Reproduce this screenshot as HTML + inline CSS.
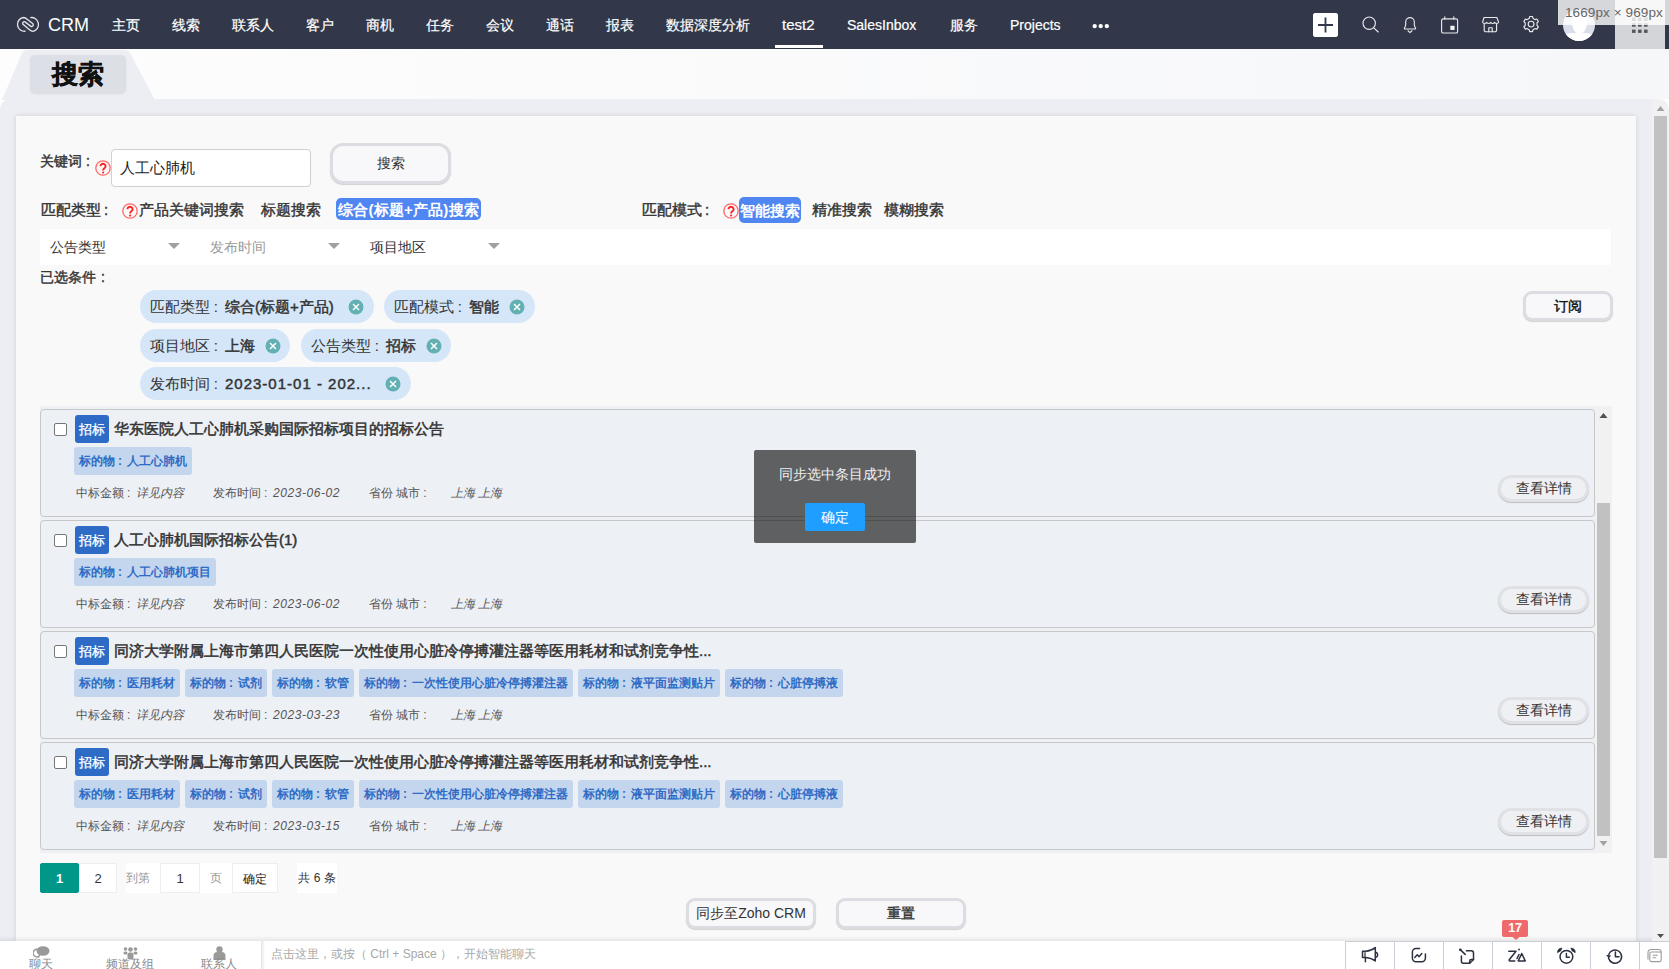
<!DOCTYPE html>
<html><head><meta charset="utf-8">
<style>
*{margin:0;padding:0;box-sizing:border-box}
html,body{width:1669px;height:969px;overflow:hidden}
body{position:relative;font-family:"Liberation Sans",sans-serif;background:#fff;color:#333}
.a{position:absolute;white-space:nowrap}
.hd{left:0;top:0;width:1669px;height:49px;background:#323849}
.nav{top:17px;font-size:14px;line-height:17px;color:#fff;-webkit-text-stroke:0.2px #fff}
.b{font-weight:bold}
.cl{display:inline-block;width:1em;padding-left:.25em}
.m{-webkit-text-stroke:0.4px currentColor}
.chip b{font-weight:normal;-webkit-text-stroke:0.45px currentColor}
.qi{width:16px;height:16px}
.chip{height:33px;border-radius:17px;background:#d4e6f8;font-size:15px;line-height:33px;color:#333}
.cx{width:16px;height:16px;border-radius:50%;background:#62b0b3}
.item{left:40px;width:1555px;height:108px;background:#edf0f5;border:1px solid #c6c7c9;border-radius:4px}
.cb{width:13px;height:13px;border:1px solid #767676;border-radius:2px;background:#fff}
.badge{width:34px;height:28px;background:#2d6bc7;border-radius:3px;color:#fff;font-size:13px;line-height:29px;text-align:center;-webkit-text-stroke:0.3px #fff}
.ttl{font-size:15px;line-height:18px;color:#333;-webkit-text-stroke:0.5px #333}
.tag{height:28px;background:#c4d6ee;border-radius:3px;color:#2f6bc4;font-size:12px;line-height:28px;font-weight:bold;padding:0 5px}
.meta{font-size:12px;line-height:14px;color:#555}
.it{font-style:italic}
.vd{width:91px;height:27px;border:3px solid #e0e1e5;border-radius:14px;background:#eef0f4;font-size:14px;line-height:20px;text-align:center;color:#333;box-shadow:0 1px 1px rgba(0,0,0,.22)}
.btn{border:3px solid #dcdde3;background:#f8f8fa;text-align:center;color:#333;box-shadow:0 1px 1px rgba(0,0,0,.16)}
.pg{height:30px;background:#fff;border:1px solid #eee;font-size:13px;line-height:30px;text-align:center;color:#333}
.bdiv{top:941px;width:1px;height:28px;background:#c9ced6}
</style></head><body>

<!-- HEADER -->
<div class="a hd"></div>
<svg class="a" style="left:0;top:0" width="48" height="40" viewBox="0 0 48 40"><path d="M25.6 31.2A7 6.9 0 1 1 23.4 17.5C25.3 17.5 26.4 18.4 27.5 19.4L32.6 23.6A1.6 1.6 0 0 1 30.6 26.1L25 21.9A1.6 1.6 0 0 0 23 24.3L28.6 28.9C29.8 29.9 31 31.3 33 31.3A6.8 6.9 0 1 0 30.3 17.7" fill="none" stroke="#e2e4e8" stroke-width="1.35"/></svg>
<div class="a" style="left:48px;top:15px;font-size:18px;line-height:21px;color:#fff">CRM</div>
<div class="a nav" style="left:112px">主页</div>
<div class="a nav" style="left:172px">线索</div>
<div class="a nav" style="left:232px">联系人</div>
<div class="a nav" style="left:306px">客户</div>
<div class="a nav" style="left:366px">商机</div>
<div class="a nav" style="left:426px">任务</div>
<div class="a nav" style="left:486px">会议</div>
<div class="a nav" style="left:546px">通话</div>
<div class="a nav" style="left:606px">报表</div>
<div class="a nav" style="left:666px">数据深度分析</div>
<div class="a nav" style="left:782px;top:16px;font-size:15px">test2</div>
<div class="a" style="left:775px;top:45px;width:48px;height:3px;background:#fff"></div>
<div class="a nav" style="left:847px">SalesInbox</div>
<div class="a nav" style="left:950px">服务</div>
<div class="a nav" style="left:1010px">Projects</div>
<svg class="a" style="left:1090px;top:22px" width="20" height="8"><g fill="#fff"><circle cx="4.7" cy="4.1" r="2.2"/><circle cx="10.7" cy="4.1" r="2.2"/><circle cx="16.8" cy="4.1" r="2.2"/></g></svg>

<!-- header right icons -->
<div class="a" style="left:1313px;top:13px;width:25px;height:24px;background:#fff;border-radius:3px"></div>
<svg class="a" style="left:1300px;top:0" width="260" height="49" viewBox="1300 0 260 49"><g fill="none" stroke="#e8e9ec" stroke-width="1.15" stroke-linecap="round" stroke-linejoin="round">
<circle cx="1369.2" cy="23.2" r="6.2"/><path d="M1373.8 27.9l4.4 4.1"/>
<path d="M1404.6 27.9c1-1.2 1.1-2.2 1.1-3.6v-2.4a4.3 4.3 0 0 1 8.6 0v2.4c0 1.4 0.1 2.4 1.1 3.6c0.5 0.6 0.2 1.1-0.5 1.1h-9.8c-0.7 0-1-0.5-0.5-1.1z"/><path d="M1408 30.8l2 1.8 2-1.8"/>
<rect x="1441.6" y="18.8" width="16" height="14.2" rx="1.6"/><path d="M1444.8 16.8v2.2M1453.8 16.8v2.2"/>
<path d="M1484 17.5h12.8l1.8 4.6a2 2 0 0 1-2 1.4c-0.8 0-1.4-0.4-2-1.1c-0.6 0.7-1.2 1.1-2 1.1s-1.4-0.4-2-1.1c-0.6 0.7-1.2 1.1-2 1.1s-1.4-0.4-2-1.1c-0.6 0.7-1.2 1.1-2 1.1a2 2 0 0 1-2-1.4z"/><path d="M1484.2 24v6.2a1.5 1.5 0 0 0 1.5 1.5h9.4a1.5 1.5 0 0 0 1.5-1.5V24"/><path d="M1488.8 31.7v-4h3.4v4"/>
<path d="M1528.15 18.99 L1529.32 18.27 L1529.63 16.54 L1532.57 16.54 L1532.88 18.27 L1534.05 18.99 L1535.26 19.64 L1536.91 19.05 L1538.38 21.59 L1537.04 22.73 L1537.00 24.10 L1537.04 25.47 L1538.38 26.61 L1536.91 29.15 L1535.26 28.56 L1534.05 29.21 L1532.88 29.93 L1532.57 31.66 L1529.63 31.66 L1529.32 29.93 L1528.15 29.21 L1526.94 28.56 L1525.29 29.15 L1523.82 26.61 L1525.16 25.47 L1525.20 24.10 L1525.16 22.73 L1523.82 21.59 L1525.29 19.05 L1526.94 19.64Z"/><circle cx="1531.1" cy="24.1" r="2.9"/>
</g><rect x="1450.3" y="25.8" width="4.3" height="4.1" rx="0.6" fill="#f0f1f3"/></svg>
<div class="a" style="left:1313px;top:13px;width:25px;height:24px;background:#fff;border-radius:3px;z-index:0"></div>
<svg class="a" style="left:1313px;top:13px" width="25" height="24"><path d="M12.5 4.5v15M5 12h15" stroke="#323849" stroke-width="1.8"/></svg>
<div class="a" style="left:1563px;top:9px;width:32px;height:32px;border-radius:50%;background:#d9dee9;overflow:hidden"><div class="a" style="left:8.5px;top:3px;width:15px;height:22px;border-radius:50%;background:#fff"></div><div class="a" style="left:-2px;top:24px;width:36px;height:20px;border-radius:10px 10px 0 0;background:#fff"></div></div>
<div class="a" style="left:1615px;top:0;width:50px;height:49px;background:#d4d5d9"></div>
<svg class="a" style="left:1630px;top:16px" width="20" height="18"><g fill="#57585d"><rect x="2" y="1.5" width="3.6" height="3.5"/><rect x="8" y="1.5" width="3.6" height="3.5"/><rect x="14" y="1.5" width="3.6" height="3.5"/><rect x="2" y="7.2" width="3.6" height="3.5"/><rect x="8" y="7.2" width="3.6" height="3.5"/><rect x="14" y="7.2" width="3.6" height="3.5"/><rect x="2" y="13.6" width="3.6" height="3.3"/><rect x="8" y="13.6" width="3.6" height="3.3"/><rect x="14" y="13.6" width="3.6" height="3.3"/></g></svg>
<div class="a" style="left:1558px;top:0;width:111px;height:25px;background:rgba(255,255,255,.8)"></div>
<div class="a" style="left:1565px;top:4px;font-size:13.5px;line-height:18px;color:#666;letter-spacing:0.1px">1669px × 969px</div>

<!-- TAB AREA -->
<div class="a" style="left:0;top:49px;width:1669px;height:50px;background:linear-gradient(90deg,#fdfdfd,#f6f7f9)"></div>
<svg class="a" style="left:0;top:49px" width="160" height="52"><path d="M2 51 L22 4 Q24 1 28 1 L124 1 Q128 1 130 4 L155 51 Z" fill="#eceef3"/></svg>
<div class="a" style="left:30px;top:55px;width:96px;height:38px;background:#dcdfe6;border-radius:5px;box-shadow:0 1px 2px rgba(0,0,0,.08)"></div>
<div class="a b" style="left:52px;top:59px;font-size:26px;line-height:30px;color:#111;-webkit-text-stroke:0.5px #111">搜索</div>

<!-- PANEL -->
<div class="a" style="left:0;top:99px;width:1652px;height:842px;background:#eceef3;border-top-left-radius:10px"></div>
<div class="a" style="left:1652px;top:99px;width:17px;height:842px;background:#f1f1f1;border-top-right-radius:10px"></div>
<svg class="a" style="left:1654px;top:103px" width="13" height="10"><path d="M2.5 8h8l-4-5z" fill="#a3a3a3"/></svg>
<div class="a" style="left:1654px;top:116px;width:13px;height:742px;background:#c1c1c1"></div>
<svg class="a" style="left:1654px;top:931px" width="13" height="10"><path d="M3 3h7l-3.5 4z" fill="#505050"/></svg>

<!-- CARD -->
<div class="a" style="left:16px;top:116px;width:1620px;height:825px;background:#f9f9f9;box-shadow:0 0 5px rgba(0,0,0,.12)"></div>


<!-- search row -->
<div class="a m" style="left:40px;top:152px;font-size:14px;line-height:18px;color:#333">关键词<span style="margin-left:4px">:</span></div>
<div class="a qi" style="left:95px;top:160px"><svg width="16" height="16" style="display:block"><circle cx="8" cy="8" r="7.2" fill="none" stroke="#f66" stroke-width="1.3"/><path d="M5.4 6.1a2.6 2.4 0 1 1 4 2.1c-0.9 0.6-1.3 1.1-1.3 2.2" fill="none" stroke="#f22" stroke-width="1.9"/><circle cx="8.1" cy="12.5" r="1.1" fill="#f22"/></svg></div>
<div class="a" style="left:111px;top:149px;width:200px;height:38px;background:#fff;border:1px solid #cfd0d2;border-radius:4px;font-size:15px;line-height:36px;padding-left:8px;color:#222">人工心肺机</div>
<div class="a btn" style="left:330px;top:143px;width:121px;height:41px;border-radius:13px;font-size:14px;line-height:35px">搜索</div>

<div class="a m" style="left:41px;top:201px;font-size:15px;line-height:18px">匹配类型<span style="margin-left:3px">:</span></div>
<div class="a qi" style="left:122px;top:203px"><svg width="16" height="16" style="display:block"><circle cx="8" cy="8" r="7.2" fill="none" stroke="#f66" stroke-width="1.3"/><path d="M5.4 6.1a2.6 2.4 0 1 1 4 2.1c-0.9 0.6-1.3 1.1-1.3 2.2" fill="none" stroke="#f22" stroke-width="1.9"/><circle cx="8.1" cy="12.5" r="1.1" fill="#f22"/></svg></div>
<div class="a m" style="left:139px;top:201px;font-size:15px;line-height:18px">产品关键词搜索</div>
<div class="a m" style="left:261px;top:201px;font-size:15px;line-height:18px">标题搜索</div>
<div class="a b" style="left:336px;top:198px;width:145px;height:22px;background:#4f86f2;border-radius:5px;color:#fff;font-size:15px;line-height:23px;letter-spacing:0.2px;text-align:center">综合(标题+产品)搜索</div>

<div class="a m" style="left:642px;top:201px;font-size:15px;line-height:18px">匹配模式<span style="margin-left:3px">:</span></div>
<div class="a qi" style="left:723px;top:203px"><svg width="16" height="16" style="display:block"><circle cx="8" cy="8" r="7.2" fill="none" stroke="#f66" stroke-width="1.3"/><path d="M5.4 6.1a2.6 2.4 0 1 1 4 2.1c-0.9 0.6-1.3 1.1-1.3 2.2" fill="none" stroke="#f22" stroke-width="1.9"/><circle cx="8.1" cy="12.5" r="1.1" fill="#f22"/></svg></div>
<div class="a b" style="left:739px;top:197px;width:62px;height:26px;background:#4f86f2;border-radius:5px;color:#fff;font-size:15px;line-height:28px;text-align:center">智能搜索</div>
<div class="a m" style="left:812px;top:201px;font-size:15px;line-height:18px">精准搜索</div>
<div class="a m" style="left:884px;top:201px;font-size:15px;line-height:18px">模糊搜索</div>

<!-- filter bar -->
<div class="a" style="left:40px;top:229px;width:1571px;height:36px;background:#fff"></div>
<div class="a" style="left:50px;top:238px;font-size:14px;line-height:18px;color:#333">公告类型</div>
<svg class="a" style="left:168px;top:243px" width="12" height="7"><path d="M0 0h12l-6 6z" fill="#a0a0a0"/></svg>
<div class="a" style="left:210px;top:238px;font-size:14px;line-height:18px;color:#9a9a9a">发布时间</div>
<svg class="a" style="left:328px;top:243px" width="12" height="7"><path d="M0 0h12l-6 6z" fill="#a0a0a0"/></svg>
<div class="a" style="left:370px;top:238px;font-size:14px;line-height:18px;color:#333">项目地区</div>
<svg class="a" style="left:488px;top:243px" width="12" height="7"><path d="M0 0h12l-6 6z" fill="#a0a0a0"/></svg>

<div class="a m" style="left:40px;top:268px;font-size:14px;line-height:18px">已选条件<span style="margin-left:5px">:</span></div>

<!-- chips -->
<div class="a chip" style="left:140px;top:290px;width:234px;padding-left:10px">匹配类型<span class="cl">:</span><b>综合(标题+产品)</b></div>
<div class="a chip" style="left:384px;top:290px;width:151px;padding-left:10px">匹配模式<span class="cl">:</span><b>智能</b></div>
<div class="a chip" style="left:140px;top:329px;width:150px;padding-left:10px">项目地区<span class="cl">:</span><b>上海</b></div>
<div class="a chip" style="left:301px;top:329px;width:150px;padding-left:10px">公告类型<span class="cl">:</span><b>招标</b></div>
<div class="a chip" style="left:140px;top:367px;width:271px;padding-left:10px">发布时间<span class="cl">:</span><b style="letter-spacing:1px">2023-01-01 - 202...</b></div>
<svg class="a" style="left:348px;top:299px" width="16" height="16"><circle cx="8" cy="8" r="7.5" fill="#62b0b3"/><path d="M5 5l6 6M11 5l-6 6" stroke="#fff" stroke-width="1.5"/></svg>
<svg class="a" style="left:509px;top:299px" width="16" height="16"><circle cx="8" cy="8" r="7.5" fill="#62b0b3"/><path d="M5 5l6 6M11 5l-6 6" stroke="#fff" stroke-width="1.5"/></svg>
<svg class="a" style="left:265px;top:338px" width="16" height="16"><circle cx="8" cy="8" r="7.5" fill="#62b0b3"/><path d="M5 5l6 6M11 5l-6 6" stroke="#fff" stroke-width="1.5"/></svg>
<svg class="a" style="left:426px;top:338px" width="16" height="16"><circle cx="8" cy="8" r="7.5" fill="#62b0b3"/><path d="M5 5l6 6M11 5l-6 6" stroke="#fff" stroke-width="1.5"/></svg>
<svg class="a" style="left:385px;top:376px" width="16" height="16"><circle cx="8" cy="8" r="7.5" fill="#62b0b3"/><path d="M5 5l6 6M11 5l-6 6" stroke="#fff" stroke-width="1.5"/></svg>


<div class="a btn m" style="left:1523px;top:291px;width:90px;height:30px;border-radius:9px;font-size:14px;line-height:24px;color:#111">订阅</div>


<!-- LIST -->
<div class="a" style="left:40px;top:406px;width:1556px;height:447px;background:#eef0f4"></div>
<div class="a" style="left:1595px;top:406px;width:17px;height:447px;background:#f1f1f1"></div>
<svg class="a" style="left:1597px;top:410px" width="13" height="10"><path d="M2.5 8h8l-4-5z" fill="#505050"/></svg>
<div class="a" style="left:1597px;top:503px;width:13px;height:333px;background:#c1c1c1"></div>
<svg class="a" style="left:1597px;top:838px" width="13" height="10"><path d="M2.5 3h8l-4 5z" fill="#a3a3a3"/></svg>
<div class="a item" style="top:409px"></div>
<div class="a cb" style="left:54px;top:423px"></div>
<div class="a badge" style="left:75px;top:415px">招标</div>
<div class="a ttl" style="left:114px;top:420px">华东医院人工心肺机采购国际招标项目的招标公告</div>
<div class="a" style="left:74px;top:447px;display:flex;gap:5px"><span class="tag">标的物<span class="cl">:</span>人工心肺机</span></div>
<div class="a meta" style="left:76px;top:486px">中标金额<span class="cl">:</span><span class="it">详见内容</span></div>
<div class="a meta" style="left:213px;top:486px">发布时间<span class="cl">:</span><span class="it" style="letter-spacing:0.55px">2023-06-02</span></div>
<div class="a meta" style="left:369px;top:486px">省份 城市<span class="cl">:</span></div>
<div class="a meta it" style="left:451px;top:486px">上海 上海</div>
<div class="a vd" style="left:1498px;top:475px">查看详情</div>
<div class="a item" style="top:520px"></div>
<div class="a cb" style="left:54px;top:534px"></div>
<div class="a badge" style="left:75px;top:526px">招标</div>
<div class="a ttl" style="left:114px;top:531px">人工心肺机国际招标公告(1)</div>
<div class="a" style="left:74px;top:558px;display:flex;gap:5px"><span class="tag">标的物<span class="cl">:</span>人工心肺机项目</span></div>
<div class="a meta" style="left:76px;top:597px">中标金额<span class="cl">:</span><span class="it">详见内容</span></div>
<div class="a meta" style="left:213px;top:597px">发布时间<span class="cl">:</span><span class="it" style="letter-spacing:0.55px">2023-06-02</span></div>
<div class="a meta" style="left:369px;top:597px">省份 城市<span class="cl">:</span></div>
<div class="a meta it" style="left:451px;top:597px">上海 上海</div>
<div class="a vd" style="left:1498px;top:586px">查看详情</div>
<div class="a item" style="top:631px"></div>
<div class="a cb" style="left:54px;top:645px"></div>
<div class="a badge" style="left:75px;top:637px">招标</div>
<div class="a ttl" style="left:114px;top:642px">同济大学附属上海市第四人民医院一次性使用心脏冷停搏灌注器等医用耗材和试剂竞争性...</div>
<div class="a" style="left:74px;top:669px;display:flex;gap:5px"><span class="tag">标的物<span class="cl">:</span>医用耗材</span><span class="tag">标的物<span class="cl">:</span>试剂</span><span class="tag">标的物<span class="cl">:</span>软管</span><span class="tag">标的物<span class="cl">:</span>一次性使用心脏冷停搏灌注器</span><span class="tag">标的物<span class="cl">:</span>液平面监测贴片</span><span class="tag">标的物<span class="cl">:</span>心脏停搏液</span></div>
<div class="a meta" style="left:76px;top:708px">中标金额<span class="cl">:</span><span class="it">详见内容</span></div>
<div class="a meta" style="left:213px;top:708px">发布时间<span class="cl">:</span><span class="it" style="letter-spacing:0.55px">2023-03-23</span></div>
<div class="a meta" style="left:369px;top:708px">省份 城市<span class="cl">:</span></div>
<div class="a meta it" style="left:451px;top:708px">上海 上海</div>
<div class="a vd" style="left:1498px;top:697px">查看详情</div>
<div class="a item" style="top:742px"></div>
<div class="a cb" style="left:54px;top:756px"></div>
<div class="a badge" style="left:75px;top:748px">招标</div>
<div class="a ttl" style="left:114px;top:753px">同济大学附属上海市第四人民医院一次性使用心脏冷停搏灌注器等医用耗材和试剂竞争性...</div>
<div class="a" style="left:74px;top:780px;display:flex;gap:5px"><span class="tag">标的物<span class="cl">:</span>医用耗材</span><span class="tag">标的物<span class="cl">:</span>试剂</span><span class="tag">标的物<span class="cl">:</span>软管</span><span class="tag">标的物<span class="cl">:</span>一次性使用心脏冷停搏灌注器</span><span class="tag">标的物<span class="cl">:</span>液平面监测贴片</span><span class="tag">标的物<span class="cl">:</span>心脏停搏液</span></div>
<div class="a meta" style="left:76px;top:819px">中标金额<span class="cl">:</span><span class="it">详见内容</span></div>
<div class="a meta" style="left:213px;top:819px">发布时间<span class="cl">:</span><span class="it" style="letter-spacing:0.55px">2023-03-15</span></div>
<div class="a meta" style="left:369px;top:819px">省份 城市<span class="cl">:</span></div>
<div class="a meta it" style="left:451px;top:819px">上海 上海</div>
<div class="a vd" style="left:1498px;top:808px">查看详情</div>

<!-- DIALOG -->
<div class="a" style="left:754px;top:450px;width:162px;height:93px;background:rgba(0,0,0,.6);border-radius:2px"></div>
<div class="a" style="left:754px;top:465px;width:162px;text-align:center;font-size:14px;line-height:18px;color:#f0f0f0">同步选中条目成功</div>
<div class="a" style="left:805px;top:503px;width:60px;height:28px;background:#1e9fff;border-radius:2px;color:#fff;font-size:14px;line-height:28px;text-align:center">确定</div>

<!-- PAGINATION -->
<div class="a pg" style="left:40px;top:863px;width:39px;background:#009688;border-color:#009688;color:#fff;border-radius:2px;font-weight:bold">1</div>
<div class="a pg" style="left:79px;top:863px;width:38px">2</div>
<div class="a pg" style="left:126px;top:863px;width:34px;border:none;color:#999;font-size:12px;text-align:left">到第</div>
<div class="a pg" style="left:160px;top:863px;width:40px">1</div>
<div class="a pg" style="left:200px;top:863px;width:32px;border:none;color:#999;font-size:12px">页</div>
<div class="a pg" style="left:232px;top:863px;width:46px;color:#222;font-size:12px">确定</div>
<div class="a pg" style="left:297px;top:863px;width:40px;border:none;font-size:12px">共 6 条</div>

<div class="a btn" style="left:686px;top:898px;width:130px;height:31px;border-radius:9px;font-size:14px;line-height:25px">同步至Zoho CRM</div>
<div class="a btn m" style="left:836px;top:898px;width:130px;height:31px;border-radius:9px;font-size:14px;line-height:25px">重置</div>


<!-- BOTTOM BAR -->
<div class="a" style="left:0;top:936px;width:1652px;height:5px;background:linear-gradient(rgba(0,0,0,0),rgba(0,0,0,.075))"></div>
<div class="a" style="left:0;top:941px;width:1669px;height:28px;background:#fff"></div>
<div class="a" style="left:1345px;top:941px;width:324px;height:1px;background:#c9ced6"></div>


<!-- bottom bar content -->
<svg class="a" style="left:33px;top:946px" width="17" height="12" viewBox="0 0 17 12"><ellipse cx="10" cy="5" rx="6.5" ry="4.8" fill="#9a9a9a"/><path d="M4.5 3a5 4 0 0 0 1 8l1-2" fill="none" stroke="#9a9a9a" stroke-width="1.6"/></svg>
<div class="a" style="left:29px;top:957px;font-size:12px;line-height:15px;color:#8a8a8a">聊天</div>
<svg class="a" style="left:123px;top:946px" width="15" height="14" viewBox="0 0 15 14"><g fill="#9a9a9a"><circle cx="2.5" cy="3" r="1.8"/><circle cx="7.5" cy="3.5" r="2.3"/><circle cx="12.5" cy="3" r="1.8"/><rect x="0.5" y="5.5" width="4" height="3" rx="1.5"/><rect x="10.5" y="5.5" width="4" height="3" rx="1.5"/><rect x="4.5" y="6.5" width="6" height="7" rx="2"/></g></svg>
<div class="a" style="left:106px;top:957px;font-size:12px;line-height:15px;color:#8a8a8a">频道及组</div>
<svg class="a" style="left:213px;top:946px" width="13" height="14" viewBox="0 0 13 14"><g fill="#9a9a9a"><circle cx="6.5" cy="3.5" r="3.2"/><path d="M0.5 14v-4a4 4 0 0 1 4-4h4a4 4 0 0 1 4 4v4z"/></g></svg>
<div class="a" style="left:201px;top:957px;font-size:12px;line-height:15px;color:#8a8a8a">联系人</div>
<div class="a" style="left:261px;top:941px;width:4px;height:28px;background:linear-gradient(90deg,#e4e4e4,#fff)"></div>
<div class="a" style="left:271px;top:947px;font-size:12px;line-height:15px;color:#a8a8a8">点击这里，或按（ Ctrl + Space ），开始智能聊天</div>
<div class="a bdiv" style="left:1345px"></div>
<div class="a bdiv" style="left:1394px"></div>
<div class="a bdiv" style="left:1443px"></div>
<div class="a bdiv" style="left:1492px"></div>
<div class="a bdiv" style="left:1541px"></div>
<div class="a bdiv" style="left:1590px"></div>
<div class="a bdiv" style="left:1639px"></div>

<div class="a" style="left:1502px;top:920px;width:26px;height:17px;background:#ef6b6b;border-radius:2px;color:#fff;font-size:12.5px;line-height:17px;text-align:center;font-weight:bold;letter-spacing:-0.3px">17</div>
<svg class="a" style="left:1345px;top:936px" width="324" height="33" viewBox="1345 936 324 33">
<path d="M1512.5 936.9h7l-3.5 3z" fill="#ef6b6b"/>
<g fill="none" stroke="#2c3140" stroke-width="1.5" stroke-linejoin="round" stroke-linecap="round">
<path d="M1362.5 951.2h3.2Q1371.5 950.8 1375.3 947.6v13.3Q1371.5 957.8 1365.7 957.4h-3.2z"/><path d="M1365.4 957.5v4.2"/><path d="M1375.8 952.2a2.6 2.6 0 0 1 0 5"/><path d="M1365 951.5v5.8" stroke-width="1.2"/>
<path d="M1419.6 948.5h-3.6a3.6 3.6 0 0 0-3.6 3.6v6a3.6 3.6 0 0 0 3.6 3.6h5.8a3.6 3.6 0 0 0 3.6-3.6v-4.2"/><path d="M1414.8 957.4l2.4-2.6 2 1.8 2.6-3"/>
<path d="M1466.4 950.8h4.8a2.3 2.3 0 0 1 2.3 2.3v6.4l-3.8 3.8h-6.3a2 2 0 0 1-2-2v-5.2"/><path d="M1469.7 963.3v-2.3a1.5 1.5 0 0 1 1.5-1.5h2.3"/><path d="M1460.2 949.6l5 4.8"/>
<path d="M1508.8 951.3h7.2l-6.6 8.2c-0.6 0.8-0.3 1.4 0.6 1.4h4.8"/><path d="M1517 958.5l2-4"/><path d="M1521.8 953.5l-3.6 7.4h7z"/>
<circle cx="1566.4" cy="956.8" r="6.4"/><path d="M1566.4 953.6v3.6h3"/>
<path d="M1608.6 958.3a6.6 6.6 0 1 0 0.2-4"/><path d="M1615.4 952v4.7h3.6"/>
</g>
<circle cx="1519" cy="949.5" r="0.9" fill="#2c3140"/>
<path d="M1606.2 954.8l2.4 3.8 2.6-3.2z" fill="#2c3140"/>
<path d="M1557.6 952.6Q1557.4 948.4 1561.9 948.1L1560.6 950.9Z M1575.2 952.6Q1575.4 948.4 1570.9 948.1L1572.2 950.9Z" fill="#2c3140" stroke="#2c3140" stroke-width="0.8" stroke-linejoin="round"/>
<circle cx="1460.3" cy="949.7" r="1.3" fill="#2c3140"/>
<g fill="none" stroke="#9a9a9a" stroke-width="1.1"><rect x="1649.8" y="952" width="11.4" height="9.6" rx="1.6"/><path d="M1648 959.5v-6.8a3.2 3.2 0 0 1 3.2-3.2h7.2a3 3 0 0 1 3 3"/><path d="M1652.6 955.2h5.2M1652.6 957.8h3.6"/></g>
</svg>

</body></html>
